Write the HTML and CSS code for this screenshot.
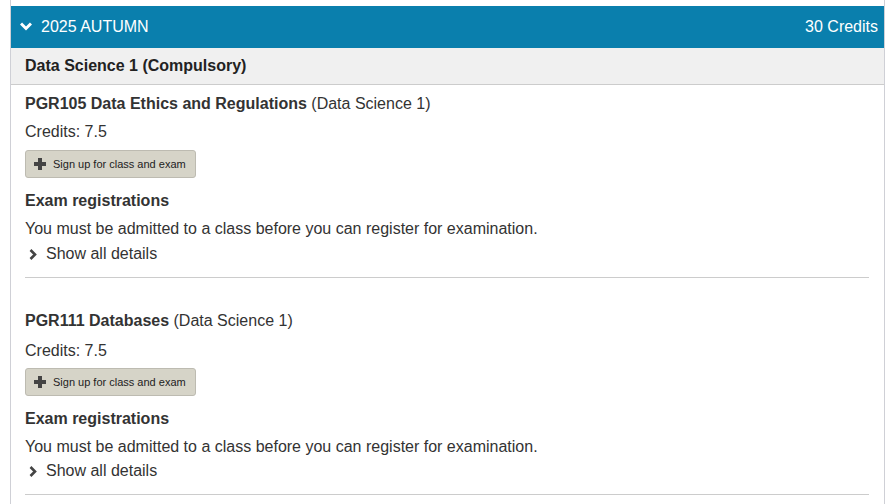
FILE: index.html
```html
<!DOCTYPE html>
<html>
<head>
<meta charset="utf-8">
<link rel="stylesheet" href="styles.css">
</head>
<body>
<div class="semester">
  <div class="sem-head">
    <div class="sem-title">
      <svg class="chev-down" width="12" height="9" viewBox="0 0 12 9"><path d="M1 1.5 L6 6.5 L11 1.5" fill="none" stroke="#fff" stroke-width="3" stroke-linejoin="miter"/></svg>
      <span>2025 AUTUMN</span>
    </div>
    <span class="sem-credits">30 Credits</span>
  </div>
  <div class="group-head">Data Science 1 (Compulsory)</div>

  <div class="course">
    <div class="course-title"><b>PGR105 Data Ethics and Regulations</b> (Data Science 1)</div>
    <div class="credits">Credits: 7.5</div>
    <button class="signup"><svg width="12" height="12" viewBox="0 0 12 12"><path d="M4 0h4v4h4v4H8v4H4V8H0V4h4z" fill="#444"/></svg><span>Sign up for class and exam</span></button>
    <div class="exam-head">Exam registrations</div>
    <div class="exam-text">You must be admitted to a class before you can register for examination.</div>
    <div class="details"><svg width="8" height="11" viewBox="0 0 8 11"><path d="M1.5 1 L6 5.5 L1.5 10" fill="none" stroke="#444" stroke-width="2.6"/></svg><span>Show all details</span></div>
    <hr class="divider">
  </div>

  <div class="course">
    <div class="course-title"><b>PGR111 Databases</b> (Data Science 1)</div>
    <div class="credits">Credits: 7.5</div>
    <button class="signup"><svg width="12" height="12" viewBox="0 0 12 12"><path d="M4 0h4v4h4v4H8v4H4V8H0V4h4z" fill="#444"/></svg><span>Sign up for class and exam</span></button>
    <div class="exam-head">Exam registrations</div>
    <div class="exam-text">You must be admitted to a class before you can register for examination.</div>
    <div class="details"><svg width="8" height="11" viewBox="0 0 8 11"><path d="M1.5 1 L6 5.5 L1.5 10" fill="none" stroke="#444" stroke-width="2.6"/></svg><span>Show all details</span></div>
    <hr class="divider">
  </div>
</div>
</body>
</html>
```
FILE: styles.css
```css
html, body {
  margin: 0;
  padding: 0;
  background: #fff;
}
body {
  font-family: "Liberation Sans", Arial, sans-serif;
  font-size: 16px;
  color: #333;
}
.semester {
  margin: 0 7px 0 10px;
  padding-top: 6px;
  border-left: 1px solid #cfd0d6;
  border-right: 1px solid #cfd0d6;
  height: 504px;
  box-sizing: border-box;
}
.sem-head {
  background: #0a7fad;
  color: #fff;
  height: 42px;
  display: flex;
  align-items: center;
  justify-content: space-between;
  padding: 0 6px 0 9px;
}
.sem-title {
  display: flex;
  align-items: center;
  gap: 9px;
}
.chev-down {
  display: block;
  margin-top: -1px;
}
.group-head {
  background: #f0f0f0;
  border-bottom: 1px solid #cccccc;
  height: 36px;
  line-height: 36px;
  padding-left: 14px;
  font-weight: bold;
  color: #222;
}
.course {
  padding: 9px 15px 0 14px;
}
.course + .course {
  padding-top: 33px;
}
.course-title {
  line-height: 20px;
}
.course-title b {
  color: #333;
}
.credits {
  line-height: 20px;
  margin-top: 8px;
}
.course + .course .credits {
  margin-top: 10px;
}
.signup {
  margin-top: 8px;
  height: 28px;
  width: 171px;
  display: flex;
  align-items: center;
  gap: 7px;
  padding: 0 0 0 8px;
  background: #d6d4c8;
  border: 1px solid #bdbbb1;
  border-radius: 3px;
  font-family: "Liberation Sans", Arial, sans-serif;
  font-size: 11px;
  color: #222;
  box-sizing: border-box;
}
.course + .course .signup {
  margin-top: 7px;
}
.signup svg {
  display: block;
}
.exam-head {
  margin-top: 13px;
  line-height: 20px;
  font-weight: bold;
}
.exam-text {
  margin-top: 8px;
  line-height: 20px;
}
.details {
  margin-top: 5px;
  line-height: 20px;
  display: flex;
  align-items: center;
  gap: 9px;
  padding-left: 4px;
}
.course + .course .details {
  margin-top: 4px;
}
.details svg {
  display: block;
}
.divider {
  margin: 13px 0 0 0;
  border: 0;
  border-top: 1px solid #cccccc;
  height: 0;
}
```
